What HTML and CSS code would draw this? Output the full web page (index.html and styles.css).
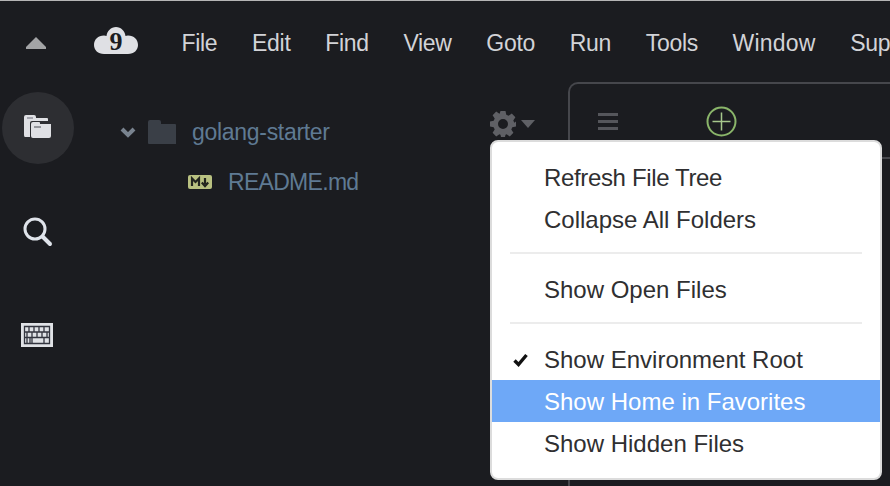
FILE: index.html
```html
<!DOCTYPE html>
<html lang="en">
<head>
<meta charset="utf-8">
<title>Cloud9 IDE</title>
<link rel="stylesheet" href="styles.css">
</head>
<body>
<div class="app">
  <header class="topbar">
    <svg class="collapse" width="20" height="12" viewBox="0 0 20 12"><path d="M10 0 L20 10 V12 H0 V10 Z" fill="#a3a4a6"/></svg>
    <div class="logo">
      <svg class="logo-mark" width="44" height="28" viewBox="0 0 44 28"><path d="M10 27 C4 27 0 23 0 18 C0 12.500 4 8.500 10 8.500 C11 8.500 12 8.700 12.500 9 C13 4 17 0 22 0 C27 0 31 4 31.500 9 C32 8.700 33 8.500 34 8.500 C40 8.500 44 12.500 44 18 C44 23 40 27 34 27 Z" fill="#dfe0e4"/><text x="22" y="22.500" class="nine">9</text></svg>
    </div>
    <nav class="menubar">
      <span>File</span><span>Edit</span><span>Find</span><span>View</span><span>Goto</span><span>Run</span><span>Tools</span><span class="wide">Window</span><span>Support</span>
    </nav>
  </header>
  <div class="workspace">
    <aside class="rail">
      <div class="rail-btn active">
        <svg class="nudge lift" width="28" height="24" viewBox="0 0 28 24"><path d="M1 3 Q1 1 3 1 H11 Q13 1 13 3 V4 H24 Q25 4 25 5 V7 H9 Q7 7 7 9 V23 H2 Q1 23 1 21 Z" fill="#dfe0e4"/><path d="M8 10 Q8 8 10 8 H16 Q17 8 17 9 V10 H28 V22 Q28 24 26 24 H10 Q8 24 8 22 Z" fill="#dfe0e4"/><path d="M11 13 H18" stroke="#4b4c54" stroke-width="1"/><path d="M4 4 H10" stroke="#6a6b78" stroke-width="1"/></svg>
      </div>
      <div class="rail-btn">
        <svg width="30" height="30" viewBox="0 0 30 30"><circle cx="12" cy="12" r="10" fill="none" stroke="#dfe3ea" stroke-width="3"/><path d="M19.500 19.500 L27 27" stroke="#dfe3ea" stroke-width="4" stroke-linecap="round"/></svg>
      </div>
      <div class="rail-btn">
        <svg class="nudge" width="32" height="24" viewBox="0 0 32 24"><rect width="32" height="24" fill="#e0e2e6"/><path d="M3.500 3.500 H28.500 V20.500 H3.500 Z M3.500 9 H28.500 M3.500 14.500 H28.500 M8 3.500 V9 M13 3.500 V9 M18 3.500 V9 M23 3.500 V9 M6 9 V20.500 M11 9 V20.500 M16 9 V14.500 M21 9 V14.500 M26 9 V14.500 M9 14.500 V20.500 M23 14.500 V20.500" fill="none" stroke="#33353f" stroke-width="1.300"/></svg>
      </div>
    </aside>
    <section class="tree">
      <div class="tree-row root">
        <svg class="chev" width="16" height="11" viewBox="0 0 16 11"><path d="M2 2 L8 8 L14 2" fill="none" stroke="#79838f" stroke-width="4"/></svg>
        <svg class="folder" width="28" height="24" viewBox="0 0 28 24"><path d="M0 2 Q0 0 2 0 H11 Q13 0 13 2 V4 H27 Q28 4 28 5 V24 H1 Q0 24 0 23 Z" fill="#3a3f47"/></svg>
        <span class="name">golang-starter</span>
      </div>
      <div class="tree-row file">
        <svg class="md" width="24" height="14" viewBox="0 0 24 14"><rect width="24" height="14" rx="2" fill="#b9c181"/><path d="M4 11 V3.500 L7.500 7 L11 3.500 V11" fill="none" stroke="#23251f" stroke-width="2.200"/><path d="M17 3 V9 M13.800 7.500 L17 11 L20.200 7.500" fill="none" stroke="#23251f" stroke-width="2.200"/></svg>
        <span class="name tight">README.md</span>
      </div>
      <div class="gear">
        <svg width="26" height="26" viewBox="0 0 26 26"><path fill="#5f6065" fill-rule="evenodd" d="M10.500 0 H15.500 L16.300 3.700 L18.600 4.700 L21.800 2.600 L25.400 6.200 L23.300 9.400 L24.300 11.700 L26 10.500 V15.500 L22.300 16.300 L21.300 18.600 L23.400 21.800 L19.800 25.400 L16.600 23.300 L15.500 23.700 L15 26 H11 L10.500 23.700 L9.400 23.300 L6.200 25.400 L2.600 21.800 L4.700 18.600 L3.700 16.300 L0 15.500 V10.500 L3.700 9.700 L4.700 7.400 L2.600 4.200 L6.200 0.600 L9.400 2.700 L9.700 2.600 Z M13 8 A5 5 0 1 0 13 18 A5 5 0 1 0 13 8 Z"/></svg>
        <svg width="14" height="8" viewBox="0 0 14 8"><path d="M0 0 H14 L7 8 Z" fill="#5f6065"/></svg>
      </div>
    </section>
    <main class="editor">
      <div class="tabs">
        <svg class="burger" width="20" height="17" viewBox="0 0 20 17"><path d="M0 1.500 H20 M0 8.500 H20 M0 15.500 H20" stroke="#55565b" stroke-width="3"/></svg>
        <svg class="plus" width="31" height="31" viewBox="0 0 31 31"><circle cx="15.500" cy="15.500" r="14" fill="none" stroke="#8ab56a" stroke-width="2"/><path d="M15.500 6.500 V24.500 M6.500 15.500 H24.500" stroke="#a6c78c" stroke-width="1.500"/></svg>
      </div>
      <div class="tabline"></div>
    </main>
  </div>
  <div class="menu">
    <div class="group">
      <div class="item snug">Refresh File Tree</div>
      <div class="item">Collapse All Folders</div>
    </div>
    <div class="group">
      <div class="item">Show Open Files</div>
    </div>
    <div class="group">
      <div class="item checked"><svg class="check" width="15" height="14" viewBox="0 0 15 14"><path d="M1.500 7.500 L5.500 11.500 L13.500 2" fill="none" stroke="#111" stroke-width="3.400"/></svg>Show Environment Root</div>
      <div class="item selected">Show Home in Favorites</div>
      <div class="item">Show Hidden Files</div>
    </div>
  </div>
</div>
</body>
</html>
```

FILE: styles.css
```css
* { box-sizing: border-box; }
html, body { margin: 0; height: 100%; }
body {
  background: #1b1c20;
  font-family: "Liberation Sans", Arial, sans-serif;
  overflow: hidden;
}
.app {
  position: relative;
  width: 890px;
  height: 486px;
  border-top: 1px solid #b5b5b5;
  display: flex;
  flex-direction: column;
  overflow: hidden;
}
.topbar {
  height: 81px;
  flex: none;
  display: flex;
  align-items: center;
  padding: 0 0 0 26px;
}
.collapse { flex: none; margin-top: 2px; }
.logo { flex: none; margin-left: 48px; display: flex; margin-top: -2px; }
.logo-mark { overflow: visible; }
.nine {
  font-family: "Liberation Serif", serif;
  font-size: 26px;
  font-weight: bold;
  text-anchor: middle;
  fill: #1b1c20;
}
.menubar {
  display: flex;
  gap: 34.700px;
  margin-left: 43.500px;
  margin-top: 4px;
  white-space: nowrap;
  font-size: 23px;
  letter-spacing: -0.300px;
  color: #d2d3d7;
}
.menubar .wide { letter-spacing: 0.200px; }
.workspace { flex: 1; display: flex; min-height: 0; }
.rail {
  flex: none;
  width: 76px;
  display: flex;
  flex-direction: column;
  align-items: center;
  padding-top: 10px;
  gap: 31.500px;
}
.rail-btn {
  width: 72px;
  height: 72px;
  flex: none;
  border-radius: 50%;
  display: flex;
  align-items: center;
  justify-content: center;
}
.rail-btn.active { background: #2d2e32; }
.nudge { margin-right: 2px; }
.lift { margin-bottom: 4px; }
.tree { flex: none; width: 493px; position: relative; padding-top: 33px; color: #5f7a93; font-size: 23px; }
.tree-row { display: flex; align-items: center; }
.tree-row.root { padding-left: 44px; height: 34px; }
.tree-row.file { padding-left: 112px; height: 34px; margin-top: 16px; }
.chev { margin-right: 12px; }
.folder { margin-right: 16px; }
.md { margin-right: 16px; }
.name { letter-spacing: -0.300px; }
.name.tight { letter-spacing: -0.700px; }
.gear {
  position: absolute;
  left: 414px;
  top: 29px;
  display: flex;
  align-items: center;
  gap: 5px;
}
.editor {
  flex: 1;
  margin-left: -1px;
  border-top: 2px solid #46474c;
  border-left: 2px solid #46474c;
  border-top-left-radius: 10px;
}
.tabs { display: flex; align-items: center; height: 73px; padding: 1px 0 0 28px; }
.plus { margin-left: 88px; }
.tabline { height: 2px; background: #46474c; }
.menu {
  position: absolute;
  left: 490px;
  top: 139px;
  width: 392px;
  height: 340px;
  background: #fff;
  border: 2px solid #dcdcdc;
  border-radius: 8px;
  padding: 15px 0 0;
  color: #2f2f31;
  font-size: 24px;
}
.group {
  margin: 0 18px 15px;
  padding: 0 0 11px;
  border-bottom: 2px solid #ececec;
}
.group:nth-child(2) { margin-bottom: 14px; }
.group:last-child { border-bottom: 0; margin: 0; padding: 0; }
.item { position: relative; height: 42px; line-height: 42px; padding-left: 34px; white-space: nowrap; }
.item.snug { letter-spacing: -0.350px; }
.group:last-child .item { padding-left: 52px; padding-top: 1px; }
.check { position: absolute; left: 21px; top: 15px; }
.item.selected { background: #6ea8f7; color: #fff; }
```
